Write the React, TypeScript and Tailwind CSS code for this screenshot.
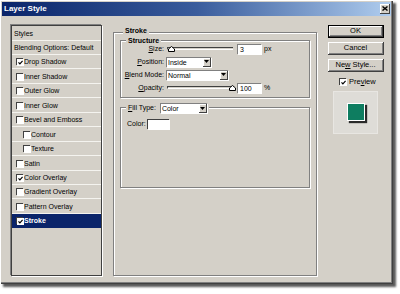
import React from "react";

type Row = {
  label: string;
  h: string;
  plain?: boolean;
  checked?: boolean;
  indent?: boolean;
  selected?: boolean;
};

const rows: Row[] = [
  { label: "Styles", h: "h-[15px]", plain: true },
  { label: "Blending Options: Default", h: "h-[14px]", plain: true },
  { label: "Drop Shadow", h: "h-[14px]", checked: true },
  { label: "Inner Shadow", h: "h-[15px]" },
  { label: "Outer Glow", h: "h-[14px]" },
  { label: "Inner Glow", h: "h-[15px]" },
  { label: "Bevel and Emboss", h: "h-[14px]" },
  { label: "Contour", h: "h-[15px]", indent: true },
  { label: "Texture", h: "h-[14px]", indent: true },
  { label: "Satin", h: "h-[15px]" },
  { label: "Color Overlay", h: "h-[14px]", checked: true },
  { label: "Gradient Overlay", h: "h-[14px]" },
  { label: "Pattern Overlay", h: "h-[15px]" },
  { label: "Stroke", h: "h-[14px]", checked: true, selected: true },
];

function CheckBox({ checked }: { checked?: boolean }) {
  return (
    <span className="w-[7px] h-[7px] shrink-0 bg-white border-t border-l border-[#404040] shadow-[1px_1px_0_#ffffff] flex items-center justify-center">
      {checked && (
        <svg width="5" height="5" viewBox="0 0 5 5">
          <path d="M0.5 2.3 L1.9 3.8 L4.6 0.8" fill="none" stroke="#000" strokeWidth="1.2" />
        </svg>
      )}
    </span>
  );
}

function Select({ value, w }: { value: string; w: string }) {
  return (
    <div className={`${w} h-[10px] flex bg-white border-t border-l border-[#808080] shadow-[1px_1px_0_#ffffff]`}>
      <span className="flex-1 pl-[1px] text-[7px] leading-[9px] text-black">{value}</span>
      <span className="w-[8px] h-[9px] bg-[#d4d0c8] border-r border-b border-[#404040] shadow-[inset_1px_1px_0_#ffffff] flex items-center justify-center">
        <svg width="5" height="3" viewBox="0 0 5 3">
          <path d="M0 0 H5 L2.5 3 Z" fill="#000" />
        </svg>
      </span>
    </div>
  );
}

function Slider({ right }: { right?: boolean }) {
  return (
    <div className="relative w-[66px] h-[10px] flex items-center">
      <div className="w-full h-[3px] border-t border-l border-[#404040] border-b border-b-white bg-[#d4d0c8]" />
      <svg
        width="7"
        height="6"
        viewBox="0 0 7 6"
        className={right ? "absolute right-[-3px] top-[2px]" : "absolute left-[1px] top-[2px]"}
      >
        <path d="M0.5 5.5 V3 L3.5 0.5 L6.5 3 V5.5 Z" fill="#fff" stroke="#000" strokeWidth="1" />
      </svg>
    </div>
  );
}

function NumInput({ value }: { value: string }) {
  return (
    <div className="w-[24px] h-[10px] bg-white border-t border-l border-[#808080] shadow-[1px_1px_0_#ffffff] pl-[2px] text-[7px] leading-[9px]">
      {value}
    </div>
  );
}

function Label({ children }: { children: React.ReactNode }) {
  return <span className="w-[43px] text-right text-[7px] leading-[9px] text-black">{children}</span>;
}

function Btn({ children, def }: { children: React.ReactNode; def?: boolean }) {
  return (
    <div
      className={
        def
          ? "w-[56px] h-[13px] border border-black flex"
          : "w-[56px] h-[13px] flex"
      }
    >
      <div className="flex-1 bg-[#d4d0c8] border-r border-b border-[#404040] shadow-[inset_1px_1px_0_#ffffff,inset_-1px_-1px_0_#808080] flex items-center justify-center text-[7.5px] leading-none text-black">
        <span className="whitespace-pre">{children}</span>
      </div>
    </div>
  );
}

export default function App() {
  return (
    <div className="w-[400px] h-[294px] bg-white font-['Liberation_Sans',Arial,sans-serif]">
      <div className="w-[393px] h-[284px] bg-[#d4d0c8] flex flex-col shadow-[inset_1px_1px_0_#ffffff,inset_-1px_-1px_0_#404040,inset_-2px_-2px_0_#808080,3px_3px_2px_rgba(0,0,0,0.65)]">
        {/* Title bar */}
        <div className="mx-[2px] mt-[2px] h-[14px] bg-linear-to-r from-[#0a246a] via-[#3a5c9c] to-[#b0cdee] flex items-center justify-between">
          <span className="pl-[2px] text-[8px] font-bold text-white leading-none">Layer Style</span>
          <span className="mr-[1px] w-[10px] h-[10px] bg-[#d4d0c8] border-r border-b border-[#404040] shadow-[inset_1px_1px_0_#ffffff] flex items-center justify-center">
            <svg width="6" height="5" viewBox="0 0 6 5">
              <path d="M0.5 0.5 L5.5 4.5 M5.5 0.5 L0.5 4.5" stroke="#000" strokeWidth="1.4" />
            </svg>
          </span>
        </div>

        {/* Body */}
        <div className="flex items-start pt-[9px]">
          {/* Styles list */}
          <div className="ml-[11px] w-[91px] h-[251px] border border-[#404040] shadow-[-1px_-1px_0_#808080,1px_1px_0_#ffffff] flex flex-col">
            {rows.map((r) => (
              <div
                key={r.label}
                className={`${r.h} shrink-0 flex items-center border-b ${
                  r.selected ? "bg-[#0a246a] border-[#0a246a]" : "border-[#f4f3ef]"
                } ${r.plain ? "pl-[2px]" : r.indent ? "pl-[11px] gap-[1px]" : "pl-[4px] gap-[1px]"}`}
              >
                {!r.plain && <CheckBox checked={r.checked} />}
                <span
                  className={`text-[7px] leading-none whitespace-nowrap ${
                    r.selected ? "text-white font-bold" : "text-black"
                  }`}
                >
                  {r.label}
                </span>
              </div>
            ))}
          </div>

          {/* Middle: Stroke frame */}
          <div className="relative ml-[11px] mt-[7px] w-[204px] h-[244px] border border-[#808080] shadow-[inset_1px_1px_0_#ffffff,1px_1px_0_#ffffff] px-[6px] pt-[7px] flex flex-col">
            <span className="absolute left-[9px] top-[-7px] px-[2px] bg-[#d4d0c8] text-[7px] font-bold leading-[9px] text-black">
              Stroke
            </span>

            {/* Structure frame */}
            <div className="relative w-[190px] h-[58px] border border-[#808080] shadow-[inset_1px_1px_0_#ffffff,1px_1px_0_#ffffff] pt-[1px] flex flex-col">
              <span className="absolute left-[5px] top-[-5px] px-[2px] bg-[#d4d0c8] text-[7px] font-bold leading-[9px] text-black">
                Structure
              </span>
              <div className="h-[13px] flex items-center">
                <Label>
                  <u>S</u>ize:
                </Label>
                <div className="ml-[3px]">
                  <Slider />
                </div>
                <div className="ml-[4px]">
                  <NumInput value="3" />
                </div>
                <span className="ml-[3px] text-[7px] leading-none">px</span>
              </div>
              <div className="h-[13px] flex items-center">
                <Label>
                  <u>P</u>osition:
                </Label>
                <div className="ml-[2px]">
                  <Select value="Inside" w="w-[45px]" />
                </div>
              </div>
              <div className="h-[13px] flex items-center">
                <Label>
                  <u>B</u>lend Mode:
                </Label>
                <div className="ml-[2px]">
                  <Select value="Normal" w="w-[62px]" />
                </div>
              </div>
              <div className="h-[13px] flex items-center">
                <Label>
                  <u>O</u>pacity:
                </Label>
                <div className="ml-[3px]">
                  <Slider right />
                </div>
                <div className="ml-[4px]">
                  <NumInput value="100" />
                </div>
                <span className="ml-[3px] text-[7px] leading-none">%</span>
              </div>
            </div>

            {/* Fill Type frame */}
            <div className="relative mt-[9px] w-[190px] h-[81px] border border-[#808080] shadow-[inset_1px_1px_0_#ffffff,1px_1px_0_#ffffff] pl-[6px] pt-[11px]">
              <div className="absolute left-[5px] top-[-5px] px-[2px] bg-[#d4d0c8] flex items-center gap-[4px]">
                <span className="text-[7px] leading-[10px] text-black">
                  <u>F</u>ill Type:
                </span>
                <Select value="Color" w="w-[47px]" />
              </div>
              <div className="flex items-center">
                <span className="text-[7px] leading-[10px] text-black">Color:</span>
                <span className="ml-[1px] w-[22px] h-[10px] bg-white border-t border-l border-[#404040] shadow-[1px_1px_0_#ffffff]" />
              </div>
            </div>
          </div>

          {/* Right column */}
          <div className="ml-[11px] flex flex-col">
            <Btn def>OK</Btn>
            <div className="mt-[4px]">
              <Btn>Cancel</Btn>
            </div>
            <div className="mt-[4px]">
              <Btn>
                <>Ne<u>w</u>{" "}Style...</>
              </Btn>
            </div>
            <div className="mt-[6px] ml-[11px] flex items-center gap-[3px]">
              <CheckBox checked />
              <span className="text-[7.5px] leading-none text-black">
                Pre<u>v</u>iew
              </span>
            </div>
            <div className="mt-[5px] ml-[5px] w-[45px] h-[43px] bg-[#dedcd7] border border-[#e8e6e2] flex items-center justify-center">
              <div className="w-[18px] h-[18px] bg-[#0e7d60] border border-white shadow-[2px_2px_1px_#2a2a2a]" />
            </div>
          </div>
        </div>
      </div>
    </div>
  );
}
